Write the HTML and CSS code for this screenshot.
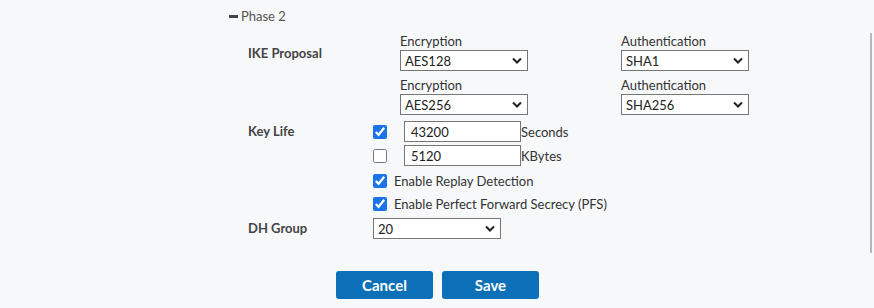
FILE: index.html
```html
<!DOCTYPE html>
<html lang="en">
<head>
    <meta charset="UTF-8">
    <title>Phase 2</title>
    <link rel="stylesheet" href="styles.css">
</head>
<body>
    <div class="layout">
        <div class="content">
            <div class="section-title"><span class="collapse"></span>Phase 2</div>

            <div class="form">
                <div class="label label-top">IKE Proposal</div>
                <div class="proposal">
                    <div class="field">
                        <div class="field-label">Encryption</div>
                        <select class="select"><option>AES128</option></select>
                    </div>
                    <div class="field">
                        <div class="field-label">Authentication</div>
                        <select class="select"><option>SHA1</option></select>
                    </div>
                    <div class="field">
                        <div class="field-label">Encryption</div>
                        <select class="select"><option>AES256</option></select>
                    </div>
                    <div class="field">
                        <div class="field-label">Authentication</div>
                        <select class="select"><option>SHA256</option></select>
                    </div>
                </div>

                <div class="label label-life">Key Life</div>
                <div class="life">
                    <div class="life-row">
                        <input type="checkbox" class="check" checked>
                        <input type="text" class="text-input" value="43200">
                        <span class="unit">Seconds</span>
                    </div>
                    <div class="life-row">
                        <input type="checkbox" class="check">
                        <input type="text" class="text-input" value="5120">
                        <span class="unit">KBytes</span>
                    </div>
                </div>

                <div></div>
                <div class="options">
                    <label class="option"><input type="checkbox" class="check" checked>Enable Replay Detection</label>
                    <label class="option"><input type="checkbox" class="check" checked>Enable Perfect Forward Secrecy (PFS)</label>
                </div>

                <div class="label label-dh">DH Group</div>
                <div class="dh">
                    <select class="select"><option>20</option></select>
                </div>
            </div>
        </div>
        <div class="rail"></div>
    </div>

    <div class="actions">
        <button class="btn">Cancel</button>
        <button class="btn">Save</button>
    </div>
</body>
</html>
```

FILE: styles.css
```css
body {
    margin: 0;
    background-color: #f7f8fa;
    font-family: Lato, "Open Sans", sans-serif;
    font-size: 13px;
    color: #333;
}
.layout {
    display: flex;
    height: 256px;
}
.content {
    flex: 1;
    padding: 8px 0 0 229px;
}
.rail {
    width: 2px;
    height: 220px;
    margin: 33px 2px 0 0;
    background-color: #b3b8bb;
}
.section-title {
    display: flex;
    align-items: center;
    height: 16px;
    font-size: 13px;
    color: #555;
}
.collapse {
    width: 9px;
    height: 3px;
    background-color: #444;
    margin-right: 3px;
}
.form {
    display: grid;
    grid-template-columns: 125px auto;
    margin: 8px 0 0 19px;
}
.label {
    font-weight: bold;
    color: #444;
}
.label-top {
    padding-top: 13px;
}
.label-life {
    padding-top: 6px;
    line-height: 21px;
}
.label-dh {
    padding-top: 6px;
    line-height: 21px;
}
.proposal {
    display: grid;
    grid-template-columns: 221px 130px;
    row-gap: 5px;
    padding-left: 27px;
}
.field-label {
    line-height: 18px;
}
.select {
    appearance: none;
    -webkit-appearance: none;
    width: 128px;
    height: 21px;
    padding: 0 4px;
    border: 1px solid #767676;
    border-radius: 0;
    background: #fff url("data:image/svg+xml;utf8,<svg xmlns='http://www.w3.org/2000/svg' width='10' height='7' viewBox='0 0 10 7'><path d='M1 1.5 5 5.5 9 1.5' fill='none' stroke='%23222' stroke-width='2'/></svg>") no-repeat right 5px center;
    font-family: inherit;
    font-size: 13px;
    color: #222;
}
.life {
    display: flex;
    flex-direction: column;
    gap: 3px;
    margin-top: 6px;
}
.life-row {
    display: flex;
    align-items: center;
}
.check {
    width: 14px;
    height: 14px;
    margin: 0;
    accent-color: #1a73e8;
}
.life-row .check {
    margin-right: 17px;
}
.text-input {
    box-sizing: border-box;
    width: 117px;
    height: 21px;
    padding: 0 6px;
    border: 1px solid #767676;
    font-family: inherit;
    font-size: 13px;
    color: #222;
}
.unit {
    color: #333;
}
.options {
    display: flex;
    flex-direction: column;
    gap: 7px;
    margin-top: 7px;
}
.option {
    display: flex;
    align-items: center;
    gap: 7px;
}
.dh {
    margin-top: 6px;
}
.actions {
    display: flex;
    justify-content: center;
    gap: 9px;
    padding: 15px 0 0 1px;
}
.btn {
    width: 97px;
    height: 28px;
    border: none;
    border-radius: 3px;
    background-color: #0b70b8;
    color: #fff;
    font-family: inherit;
    font-size: 15px;
    font-weight: bold;
    cursor: pointer;
}
.btn:hover {
    background-color: #095e9b;
}
```
